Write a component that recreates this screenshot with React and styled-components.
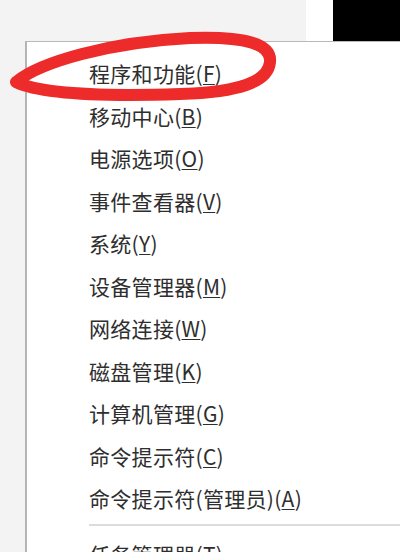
import styled, { createGlobalStyle } from 'styled-components';

const GlobalStyle = createGlobalStyle`
  html, body {
    margin: 0;
    padding: 0;
    background: #f3f3f3;
  }
`;

const items = [
  { label: '程序和功能', key: 'F' },
  { label: '移动中心', key: 'B' },
  { label: '电源选项', key: 'O' },
  { label: '事件查看器', key: 'V' },
  { label: '系统', key: 'Y' },
  { label: '设备管理器', key: 'M' },
  { label: '网络连接', key: 'W' },
  { label: '磁盘管理', key: 'K' },
  { label: '计算机管理', key: 'G' },
  { label: '命令提示符', key: 'C' },
  { label: '命令提示符(管理员)', key: 'A' },
];

function App() {
  return (
    <Page>
      <GlobalStyle />
      <TopBar>
        <TopGrey />
        <TopWhite />
        <TopBlack />
      </TopBar>
      <Body>
        <Gutter />
        <Menu>
          {items.map(item => (
            <MenuItem key={item.label}>
              {item.label}(<u>{item.key}</u>)
            </MenuItem>
          ))}
          <Separator />
          <MenuItem>
            任务管理器(<u>T</u>)
          </MenuItem>
        </Menu>
      </Body>
      <Marker viewBox="0 0 400 552" width="400" height="552">
        <path
          d="M 16 82 C 40 62, 110 42, 190 38 C 245 36, 272 44, 270 62 C 268 82, 240 92, 180 94 C 120 96, 45 96, 16 82 Z"
          fill="none"
          stroke="#ee2b2b"
          strokeWidth="12"
          strokeLinejoin="round"
        />
      </Marker>
    </Page>
  );
}
export default App;

const Page = styled.div`
  position: relative;
  width: 400px;
  height: 552px;
  overflow: hidden;
  display: flex;
  flex-direction: column;
  background: #f3f3f3;
`;

const TopBar = styled.div`
  display: flex;
  height: 41px;
  flex-shrink: 0;
`;

const TopGrey = styled.div`
  flex: 1;
  background: #f3f3f3;
`;

const TopWhite = styled.div`
  width: 27px;
  background: #ffffff;
`;

const TopBlack = styled.div`
  width: 67px;
  background: #000000;
`;

const Body = styled.div`
  display: flex;
  flex: 1;
`;

const Gutter = styled.div`
  width: 25px;
  background: #f3f3f3;
`;

const Menu = styled.div`
  flex: 1;
  background: #ffffff;
  border-left: 2px solid #b4b4b4;
  border-top: 1px solid #b8b8b8;
  padding: 10px 0 0 62px;
`;

const MenuItem = styled.div`
  height: 42.5px;
  display: flex;
  align-items: center;
  font-family: 'Noto Sans CJK SC', 'Noto Sans', sans-serif;
  font-size: 21px;
  color: #2e2e2e;
  white-space: nowrap;
  letter-spacing: 0.3px;

  u {
    text-decoration-thickness: 1px;
    text-underline-offset: 2px;
  }
`;

const Separator = styled.div`
  height: 2px;
  margin: 4px 0 7px;
  background: #dcdcdc;
`;

const Marker = styled.svg`
  position: absolute;
  top: 0;
  left: 0;
  pointer-events: none;
`;
